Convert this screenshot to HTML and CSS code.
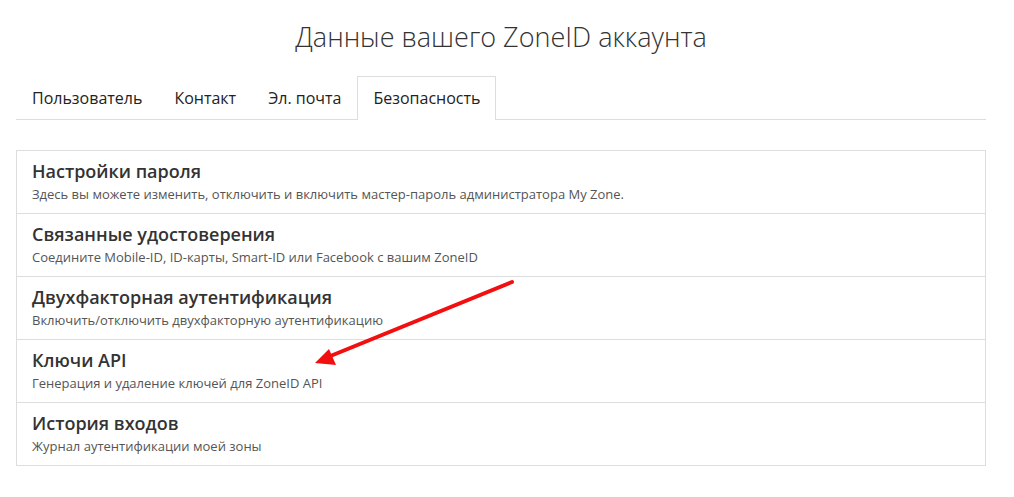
FILE: index.html
```html
<!DOCTYPE html>
<html lang="ru">
<head>
<meta charset="utf-8">
<title>Данные вашего ZoneID аккаунта</title>
<link rel="stylesheet" href="styles.css">
</head>
<body>
<div class="page">
  <h1 class="page-title">Данные вашего ZoneID аккаунта</h1>
  <nav class="tabs">
    <a class="tab">Пользователь</a>
    <a class="tab">Контакт</a>
    <a class="tab">Эл. почта</a>
    <a class="tab tab-active">Безопасность</a>
  </nav>
  <ul class="settings">
    <li class="setting">
      <div class="setting-title">Настройки пароля</div>
      <div class="setting-desc">Здесь вы можете изменить, отключить и включить мастер-пароль администратора My Zone.</div>
    </li>
    <li class="setting">
      <div class="setting-title">Связанные удостоверения</div>
      <div class="setting-desc">Соедините Mobile-ID, ID-карты, Smart-ID или Facebook с вашим ZoneID</div>
    </li>
    <li class="setting">
      <div class="setting-title">Двухфакторная аутентификация</div>
      <div class="setting-desc">Включить/отключить двухфакторную аутентификацию</div>
    </li>
    <li class="setting">
      <div class="setting-title">Ключи API</div>
      <div class="setting-desc">Генерация и удаление ключей для ZoneID API</div>
    </li>
    <li class="setting">
      <div class="setting-title">История входов</div>
      <div class="setting-desc">Журнал аутентификации моей зоны</div>
    </li>
  </ul>
  <svg class="pointer" width="1014" height="497" viewBox="0 0 1014 497">
    <line x1="512" y1="282" x2="328" y2="357" stroke="#f20f0f" stroke-width="4" stroke-linecap="round"/>
    <polygon points="315,363 329,349 336,365" fill="#f20f0f"/>
  </svg>
</div>
</body>
</html>
```
FILE: styles.css
```css
html, body {
  margin: 0;
  padding: 0;
  background: #fff;
}

body {
  font-family: "Open Sans", "Liberation Sans", sans-serif;
  color: #333;
}

.page {
  position: relative;
  width: 970px;
  margin-left: 16px;
  padding-top: 17px;
}

.page-title {
  margin: 0;
  text-align: center;
  font-size: 27px;
  font-weight: 300;
  line-height: 40px;
  color: #333;
}

.tabs {
  display: flex;
  margin-top: 19px;
  border-bottom: 1px solid #ddd;
}

.tab {
  padding: 10px 15px 10px;
  font-size: 16px;
  line-height: 22px;
  color: #222;
  border: 1px solid transparent;
  border-bottom: none;
  margin-bottom: -1px;
}

.tab-active {
  border-color: #ddd;
  background: #fff;
  padding-bottom: 11px;
}

.settings {
  list-style: none;
  margin: 30px 0 0;
  padding: 0;
  border: 1px solid #ddd;
}

.setting {
  padding: 8px 15px 9px;
  border-top: 1px solid #ddd;
}

.setting:first-child {
  border-top: none;
}

.setting-title {
  font-size: 18px;
  font-weight: 600;
  line-height: 25px;
  color: #333;
}

.setting-desc {
  font-size: 13px;
  line-height: 20px;
  color: #555;
}

.pointer {
  position: absolute;
  left: -16px;
  top: 0;
  pointer-events: none;
}
```
